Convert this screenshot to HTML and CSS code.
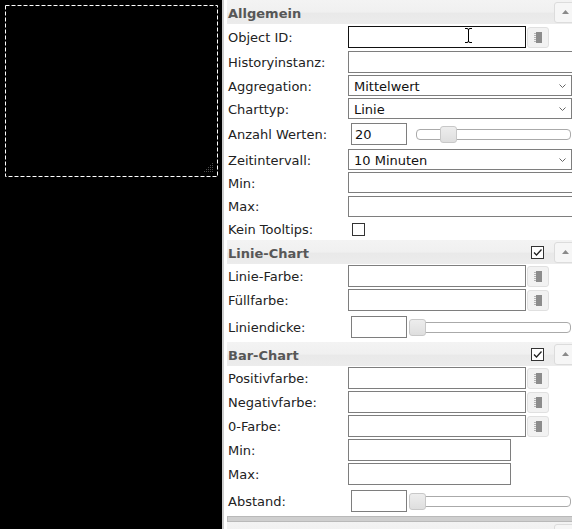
FILE: index.html
```html
<!DOCTYPE html>
<html lang="de">
<head>
<meta charset="utf-8">
<title>Widget-Attribute</title>
<link rel="stylesheet" href="styles.css">
</head>
<body>
<div class="app">
  <div class="canvas">
    <div class="widget">
      <svg class="frame" width="213" height="172" viewBox="0 0 213 172"><rect x="0.5" y="0.5" width="212" height="171" fill="none" stroke="#fff" stroke-width="1" stroke-dasharray="4 2"/></svg>
      <svg class="resize" width="9" height="9" viewBox="0 0 9 9">
        <g fill="#4a4a4a">
          <rect x="8" y="0" width="1" height="1"/>
          <rect x="6" y="2" width="1" height="1"/><rect x="8" y="2" width="1" height="1"/>
          <rect x="4" y="4" width="1" height="1"/><rect x="6" y="4" width="1" height="1"/><rect x="8" y="4" width="1" height="1"/>
          <rect x="2" y="6" width="1" height="1"/><rect x="4" y="6" width="1" height="1"/><rect x="6" y="6" width="1" height="1"/><rect x="8" y="6" width="1" height="1"/>
          <rect x="0" y="8" width="1" height="1"/><rect x="2" y="8" width="1" height="1"/><rect x="4" y="8" width="1" height="1"/><rect x="6" y="8" width="1" height="1"/><rect x="8" y="8" width="1" height="1"/>
        </g>
      </svg>
    </div>
  </div>
  <div class="panel">
    <div class="inner">
      <div class="ghead">
        <span class="gtitle">Allgemein</span>
        <span class="collapse"><svg width="7" height="4" viewBox="0 0 7 4"><path d="M0 4 L3.5 0 L7 4 Z" fill="#8a8a8a"/></svg></span>
      </div>

      <div class="row h26">
        <span class="lbl">Object ID:</span>
        <div class="field">
          <input class="in w178 focus" type="text" value="">
          <svg class="ibeam" width="9" height="17" viewBox="0 0 9 17"><path d="M1 1.5 H3 Q4.5 1.5 4.5 3 Q4.5 1.5 6 1.5 H8 M4.5 3 V14 M1 15.5 H3 Q4.5 15.5 4.5 14 Q4.5 15.5 6 15.5 H8" fill="none" stroke="#fff" stroke-width="3"/><path d="M1 1.5 H3 Q4.5 1.5 4.5 3 Q4.5 1.5 6 1.5 H8 M4.5 3 V14 M1 15.5 H3 Q4.5 15.5 4.5 14 Q4.5 15.5 6 15.5 H8" fill="none" stroke="#000" stroke-width="1"/></svg>
        </div>
        <span class="pick"><svg width="8" height="11" viewBox="0 0 8 11"><rect x="2" y="0" width="6" height="11" fill="#8c8c8c"/><g fill="#b4b4b4"><rect x="0" y="1" width="2" height="1"/><rect x="0" y="3" width="2" height="1"/><rect x="0" y="5" width="2" height="1"/><rect x="0" y="7" width="2" height="1"/><rect x="0" y="9" width="2" height="1"/></g></svg></span>
      </div>

      <div class="row h24">
        <span class="lbl">Historyinstanz:</span>
        <input class="in wfull" type="text" value="">
      </div>

      <div class="row h23">
        <span class="lbl">Aggregation:</span>
        <div class="select"><span class="sval">Mittelwert</span><svg class="chev" width="7" height="4" viewBox="0 0 7 4"><path d="M0.5 0.5 L3.5 3.5 L6.5 0.5" fill="none" stroke="#666" stroke-width="1"/></svg></div>
      </div>

      <div class="row h23">
        <span class="lbl">Charttyp:</span>
        <div class="select"><span class="sval">Linie</span><svg class="chev" width="7" height="4" viewBox="0 0 7 4"><path d="M0.5 0.5 L3.5 3.5 L6.5 0.5" fill="none" stroke="#666" stroke-width="1"/></svg></div>
      </div>

      <div class="row h28">
        <span class="lbl">Anzahl Werten:</span>
        <input class="in small" type="text" value="20">
        <div class="slider"><span class="thumb" style="left: calc(20% - 8px)"></span></div>
      </div>

      <div class="row h23">
        <span class="lbl">Zeitintervall:</span>
        <div class="select"><span class="sval">10 Minuten</span><svg class="chev" width="7" height="4" viewBox="0 0 7 4"><path d="M0.5 0.5 L3.5 3.5 L6.5 0.5" fill="none" stroke="#666" stroke-width="1"/></svg></div>
      </div>

      <div class="row h23">
        <span class="lbl">Min:</span>
        <input class="in wfull thin" type="text" value="">
      </div>

      <div class="row h24">
        <span class="lbl">Max:</span>
        <input class="in wfull thin" type="text" value="">
      </div>

      <div class="row h22">
        <span class="lbl">Kein Tooltips:</span>
        <span class="cb cb-row"></span>
      </div>

      <div class="ghead">
        <span class="gtitle">Linie-Chart</span>
        <span class="cb cb-head"><svg width="11" height="11" viewBox="0 0 11 11"><path d="M2 5.5 L4.5 8 L9.5 2.5" fill="none" stroke="#222" stroke-width="1.3"/></svg></span>
        <span class="collapse"><svg width="7" height="4" viewBox="0 0 7 4"><path d="M0 4 L3.5 0 L7 4 Z" fill="#8a8a8a"/></svg></span>
      </div>

      <div class="row h24">
        <span class="lbl">Linie-Farbe:</span>
        <input class="in w178" type="text" value="">
        <span class="pick"><svg width="8" height="11" viewBox="0 0 8 11"><rect x="2" y="0" width="6" height="11" fill="#8c8c8c"/><g fill="#b4b4b4"><rect x="0" y="1" width="2" height="1"/><rect x="0" y="3" width="2" height="1"/><rect x="0" y="5" width="2" height="1"/><rect x="0" y="7" width="2" height="1"/><rect x="0" y="9" width="2" height="1"/></g></svg></span>
      </div>

      <div class="row h24">
        <span class="lbl">Füllfarbe:</span>
        <input class="in w178" type="text" value="">
        <span class="pick"><svg width="8" height="11" viewBox="0 0 8 11"><rect x="2" y="0" width="6" height="11" fill="#8c8c8c"/><g fill="#b4b4b4"><rect x="0" y="1" width="2" height="1"/><rect x="0" y="3" width="2" height="1"/><rect x="0" y="5" width="2" height="1"/><rect x="0" y="7" width="2" height="1"/><rect x="0" y="9" width="2" height="1"/></g></svg></span>
      </div>

      <div class="row h30">
        <span class="lbl">Liniendicke:</span>
        <input class="in small" type="text" value="">
        <div class="slider"><span class="thumb" style="left: calc(0% - 8px)"></span></div>
      </div>

      <div class="ghead">
        <span class="gtitle">Bar-Chart</span>
        <span class="cb cb-head"><svg width="11" height="11" viewBox="0 0 11 11"><path d="M2 5.5 L4.5 8 L9.5 2.5" fill="none" stroke="#222" stroke-width="1.3"/></svg></span>
        <span class="collapse"><svg width="7" height="4" viewBox="0 0 7 4"><path d="M0 4 L3.5 0 L7 4 Z" fill="#8a8a8a"/></svg></span>
      </div>

      <div class="row h24">
        <span class="lbl">Positivfarbe:</span>
        <input class="in w178" type="text" value="">
        <span class="pick"><svg width="8" height="11" viewBox="0 0 8 11"><rect x="2" y="0" width="6" height="11" fill="#8c8c8c"/><g fill="#b4b4b4"><rect x="0" y="1" width="2" height="1"/><rect x="0" y="3" width="2" height="1"/><rect x="0" y="5" width="2" height="1"/><rect x="0" y="7" width="2" height="1"/><rect x="0" y="9" width="2" height="1"/></g></svg></span>
      </div>

      <div class="row h24">
        <span class="lbl">Negativfarbe:</span>
        <input class="in w178" type="text" value="">
        <span class="pick"><svg width="8" height="11" viewBox="0 0 8 11"><rect x="2" y="0" width="6" height="11" fill="#8c8c8c"/><g fill="#b4b4b4"><rect x="0" y="1" width="2" height="1"/><rect x="0" y="3" width="2" height="1"/><rect x="0" y="5" width="2" height="1"/><rect x="0" y="7" width="2" height="1"/><rect x="0" y="9" width="2" height="1"/></g></svg></span>
      </div>

      <div class="row h24">
        <span class="lbl">0-Farbe:</span>
        <input class="in w178" type="text" value="">
        <span class="pick"><svg width="8" height="11" viewBox="0 0 8 11"><rect x="2" y="0" width="6" height="11" fill="#8c8c8c"/><g fill="#b4b4b4"><rect x="0" y="1" width="2" height="1"/><rect x="0" y="3" width="2" height="1"/><rect x="0" y="5" width="2" height="1"/><rect x="0" y="7" width="2" height="1"/><rect x="0" y="9" width="2" height="1"/></g></svg></span>
      </div>

      <div class="row h24">
        <span class="lbl">Min:</span>
        <input class="in w163" type="text" value="">
      </div>

      <div class="row h24">
        <span class="lbl">Max:</span>
        <input class="in w163" type="text" value="">
      </div>

      <div class="row h30">
        <span class="lbl">Abstand:</span>
        <input class="in small" type="text" value="">
        <div class="slider"><span class="thumb" style="left: calc(0% - 8px)"></span></div>
      </div>

      <div class="sep"></div>
      <div class="ghead">
        <span class="gtitle"></span>
        <span class="collapse"></span>
      </div>
    </div>
  </div>
</div>
</body>
</html>
```

FILE: styles.css
```css
html, body {
  margin: 0;
  padding: 0;
  background: #fff;
}

body {
  font-family: "DejaVu Sans", Verdana, sans-serif;
  font-size: 13px;
  color: #222;
}

.app {
  display: flex;
  width: 572px;
  height: 529px;
  overflow: hidden;
}

.canvas {
  flex: none;
  width: 222px;
  background: #000;
  padding: 5px;
  box-sizing: border-box;
}

.widget {
  position: relative;
  width: 213px;
  height: 172px;
}

.frame {
  display: block;
}

.resize {
  position: absolute;
  right: 5px;
  bottom: 5px;
}

.panel {
  flex: 1;
  min-width: 0;
  overflow: hidden;
  border-left: 2px solid #cdcdcd;
  padding-left: 3px;
  background: #fff;
}

.inner {
  width: 350px;
}

.ghead {
  display: flex;
  align-items: center;
  height: 24px;
  padding-left: 1px;
  background: linear-gradient(to bottom, #f3f3f3 0, #f0f0f0 50%, #e9e9e9 55%, #ececec 100%);
}

.gtitle {
  flex: 1;
  font-weight: bold;
  color: #575757;
  padding-top: 2px;
}

.collapse {
  flex: none;
  display: flex;
  align-items: center;
  justify-content: center;
  width: 22px;
  height: 21px;
  box-sizing: border-box;
  margin-right: 1px;
  border: 1px solid #dcdcdc;
  border-radius: 3px;
  background: #f6f6f6;
}

.row {
  display: flex;
  align-items: center;
  padding-left: 1px;
}

.h22 { height: 22px; }
.h23 { height: 23px; }
.h24 { height: 24px; }
.h26 { height: 26px; }
.h28 { height: 28px; }
.h30 { height: 30px; }

.lbl {
  flex: none;
  width: 120px;
  color: #222;
  white-space: nowrap;
  padding-top: 1px;
}

.field {
  position: relative;
  display: flex;
}

.in {
  flex: none;
  box-sizing: border-box;
  height: 22px;
  margin: 0;
  padding: 0 3px;
  border: 1px solid #7e7e7e;
  border-radius: 0;
  background: #fff;
  font-family: inherit;
  font-size: 13px;
  color: #111;
  outline: none;
}

.in.thin { height: 21px; }
.w178 { width: 178px; }
.w163 { width: 163px; }
.wfull { width: 240px; }
.in.focus { border-color: #111; }

.in.small {
  width: 56px;
  margin-left: 3px;
}

.ibeam {
  position: absolute;
  left: 116px;
  top: 1px;
}

.pick {
  flex: none;
  display: flex;
  align-items: center;
  justify-content: center;
  width: 22px;
  height: 21px;
  box-sizing: border-box;
  margin-left: 1px;
  border: 1px solid #e0e0e0;
  border-radius: 3px;
  background: #f2f2f2;
}

.select {
  flex: none;
  display: flex;
  align-items: center;
  justify-content: space-between;
  box-sizing: border-box;
  width: 224px;
  height: 21px;
  padding: 1px 5px 0 5px;
  border: 1px solid #7e7e7e;
  background: #fff;
  color: #111;
}

.chev { flex: none; }

.slider {
  position: relative;
  flex: none;
  box-sizing: border-box;
  width: 155px;
  height: 11px;
  margin-left: 9px;
  border: 1px solid #aaa;
  border-radius: 4px;
  background: #fff;
}

.thumb {
  position: absolute;
  top: -4px;
  width: 17px;
  height: 17px;
  box-sizing: border-box;
  border: 1px solid #c8c8c8;
  border-radius: 3px;
  background: linear-gradient(to bottom, #ededed 0, #e6e6e6 50%, #dedede 100%);
}

.cb {
  flex: none;
  display: flex;
  align-items: center;
  justify-content: center;
  width: 13px;
  height: 13px;
  box-sizing: border-box;
  border: 1px solid #333;
  background: #fff;
}

.cb-row { margin-left: 4px; }
.cb-head { margin-right: 10px; }

.sep {
  height: 6px;
  box-sizing: border-box;
  border: 1px solid #b9b9b9;
  background: #cfcfcf;
}
```
